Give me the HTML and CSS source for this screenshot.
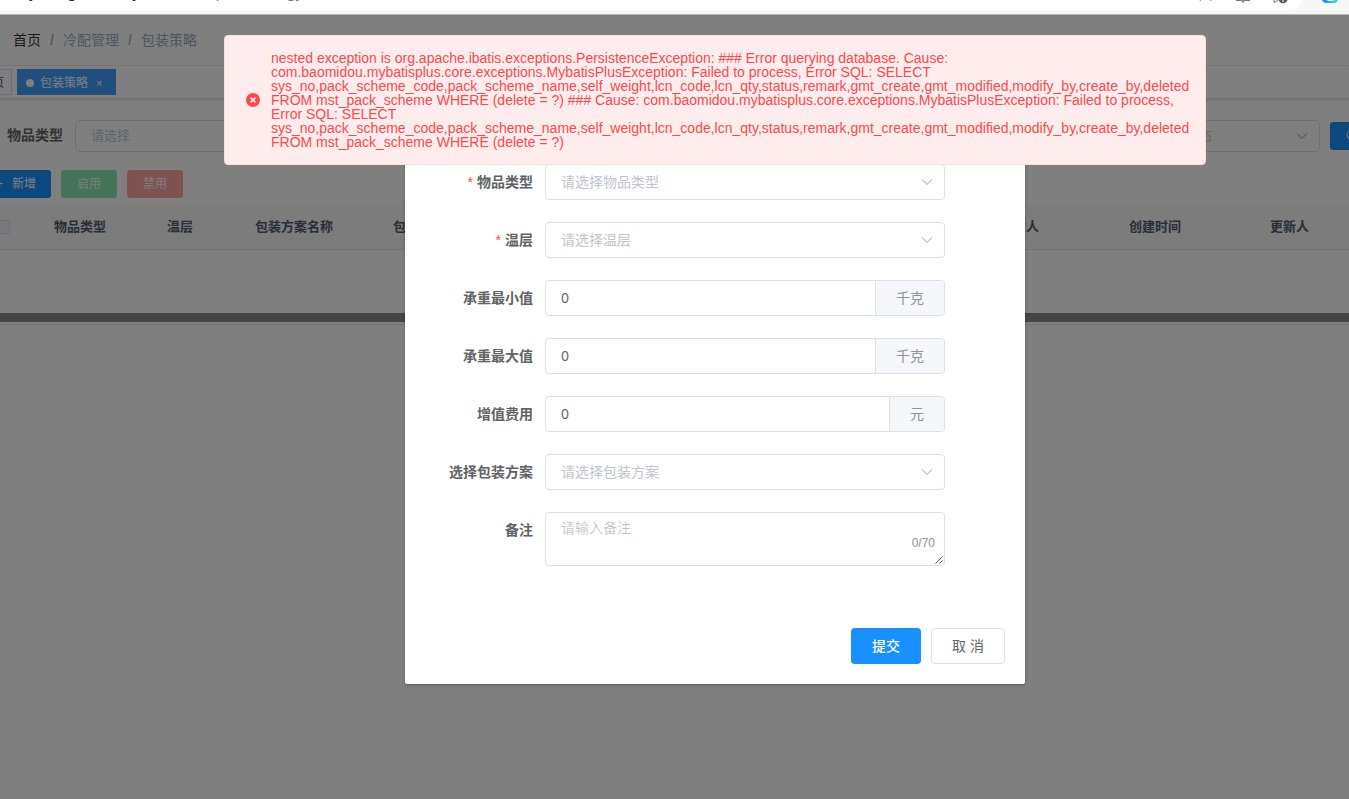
FILE: index.html
```html
<!DOCTYPE html>
<html lang="zh-CN">
<head>
<meta charset="utf-8">
<title>包装策略</title>
<link rel="stylesheet" href="styles.css">
</head>
<body>
<div class="chrome">
  <div class="omnibox">
    <span class="host">yunaighealth.cy</span><span class="path">baise/was/</span><span class="path leaf">packstrategy</span>
    <div class="tools">
      <svg width="14" height="4" viewBox="0 0 14 4"><path d="M1.500 0l-.5 1M11.500 0l.5 1" stroke="#777" fill="none"/></svg>
      <svg width="14" height="4" viewBox="0 0 14 4"><path d="M0 .5h5l2 1 2-1h5M7 0v3" stroke="#777" stroke-width="1.100" fill="none"/></svg>
      <svg width="16" height="4" viewBox="0 0 16 4"><path d="M1 0v2.500l4-2" stroke="#777" fill="none"/><path d="M5.500 0a4.800 4.800 0 0 0 9 0z" fill="#555"/><path d="M10 0v2" stroke="#fff"/></svg>
    </div>
  </div>
  <svg class="copilot" width="16" height="4" viewBox="0 0 16 4"><defs><linearGradient id="cg"><stop stop-color="#2870ea"/><stop offset=".5" stop-color="#20c6ef"/><stop offset="1" stop-color="#38e3b8"/></linearGradient></defs><path d="M0 0h5l1 1h5l1-1h4c-1 2-2 3-4 3H4C2 3 1 2 0 0z" fill="url(#cg)"/></svg>
</div>
<div class="app">
  <nav class="crumbs"><span class="home">首页</span><i>/</i><span>冷配管理</span><i>/</i><span>包装策略</span></nav>
  <div class="tabs"><span class="tab">首页</span><span class="tab active"><b class="dot"></b>包装策略<em>×</em></span></div>
  <div class="filters">
    <label>物品类型</label>
    <div class="pick first">请选择</div>
    <div class="pick last"><span>状态</span><svg width="12" height="8" viewBox="0 0 12 8"><path d="M1 1.500l5 5 5-5" fill="none" stroke="#b4b8c0" stroke-width="1.200"/></svg></div>
    <button class="search"><svg width="14" height="14" viewBox="0 0 14 14"><circle cx="6" cy="6" r="5" fill="none" stroke="#fff"/><path d="M10 10l3 3" stroke="#fff"/></svg></button>
  </div>
  <div class="actions"><span class="act add"><i>+</i>新增</span><span class="act on">启用</span><span class="act off">禁用</span></div>
  <div class="thead">
    <span class="check"></span><span>物品类型</span><span>温层</span><span>包装方案名称</span><span>包装方案</span><span>创建人</span><span>创建时间</span><span>更新人</span>
  </div>
  <div class="tbody"></div>
  <div class="scroll"></div>
  <div class="foot"></div>
</div>
<div class="mask"></div>
<div class="dialog">
  <div class="row"><label><s>*</s>物品类型</label><div class="field"><span class="ph">请选择物品类型</span><svg class="arrow" width="12" height="8" viewBox="0 0 12 8"><path d="M1 1.500l5 5 5-5"/></svg></div></div>
  <div class="row"><label><s>*</s>温层</label><div class="field"><span class="ph">请选择温层</span><svg class="arrow" width="12" height="8" viewBox="0 0 12 8"><path d="M1 1.500l5 5 5-5"/></svg></div></div>
  <div class="row"><label>承重最小值</label><div class="field"><span class="num">0</span><span class="unit">千克</span></div></div>
  <div class="row"><label>承重最大值</label><div class="field"><span class="num">0</span><span class="unit">千克</span></div></div>
  <div class="row"><label>增值费用</label><div class="field"><span class="num">0</span><span class="unit">元</span></div></div>
  <div class="row"><label>选择包装方案</label><div class="field"><span class="ph">请选择包装方案</span><svg class="arrow" width="12" height="8" viewBox="0 0 12 8"><path d="M1 1.500l5 5 5-5"/></svg></div></div>
  <div class="row"><label>备注</label><div class="field area"><span class="ph light">请输入备注</span><span class="count">0/70</span><svg class="grip" width="8" height="8" viewBox="0 0 8 8"><path d="M0.500 7.500l7-7M4.500 7.500l3-3" stroke="#555" fill="none"/></svg></div></div>
  <div class="buttons"><button class="submit">提交</button><button class="cancel">取 消</button></div>
</div>
<div class="message">
  <svg width="14" height="14" viewBox="0 0 14 14"><circle cx="7" cy="7" r="7" fill="#ff4949"/><path d="M4.600 4.600l4.800 4.800M9.400 4.600l-4.800 4.800" stroke="#ffeded" stroke-width="1.500"/></svg>
  <p>nested exception is org.apache.ibatis.exceptions.PersistenceException: ### Error querying database. Cause:<br>com.baomidou.mybatisplus.core.exceptions.MybatisPlusException: Failed to process, Error SQL: SELECT<br>sys_no,pack_scheme_code,pack_scheme_name,self_weight,lcn_code,lcn_qty,status,remark,gmt_create,gmt_modified,modify_by,create_by,deleted<br>FROM mst_pack_scheme WHERE (delete = ?) ### Cause: com.baomidou.mybatisplus.core.exceptions.MybatisPlusException: Failed to process,<br>Error SQL: SELECT<br>sys_no,pack_scheme_code,pack_scheme_name,self_weight,lcn_code,lcn_qty,status,remark,gmt_create,gmt_modified,modify_by,create_by,deleted<br>FROM mst_pack_scheme WHERE (delete = ?)</p>
</div>
</body>
</html>
```
FILE: styles.css
```css
* { box-sizing: border-box; }
body { margin: 0; width: 1349px; height: 799px; overflow: hidden; position: relative; background: #fff; color: #606266; font: 14px/20px "Liberation Sans", "Noto Sans CJK SC", sans-serif; }
i, em { font-style: normal; }
button { font: inherit; padding: 0; border: 0; }

/* browser toolbar */
.chrome { height: 15px; background: #f7f7f7; border-bottom: 1px solid #b9bbb9; display: flex; overflow: hidden; }
.omnibox { width: 1302px; height: 10px; background: #fff; border-bottom-right-radius: 14px 10px; display: flex; padding-left: 29px; line-height: 16px; overflow: hidden; white-space: pre; }
.omnibox span { margin-top: -15px; font-size: 16px; }
.host { color: #222; }
.path { color: #777; }
.leaf { letter-spacing: -.3px; }
.tools { margin-left: auto; display: flex; gap: 23px; padding-right: 13px; }
.tools svg { display: block; }
.copilot { margin-left: 20px; }

/* page */
.app { height: 784px; overflow: hidden; }
.crumbs { height: 51px; display: flex; align-items: center; padding-left: 13px; border-bottom: 1px solid #f0f0f0; color: #97a8be; }
.crumbs i { margin: 0 9px; width: 4px; color: #b0b4bc; font-weight: bold; }
.crumbs .home { color: #303133; }
.tabs { height: 33px; display: flex; align-items: center; gap: 5px; border-bottom: 1px solid #d8dce5; box-shadow: 0 1px 3px rgba(0,0,0,.15); }
.tab { height: 26px; line-height: 26px; font-size: 12px; border: 1px solid #d8dce5; width: 48px; margin-left: -36px; padding-left: 15px; color: #495060; }
.tab.active { width: 99px; margin: 0; padding: 1px 8px 0; display: flex; align-items: center; background: #409eff; border-color: #409eff; color: #fff; }
.dot { width: 8px; height: 8px; border-radius: 50%; background: #fff; margin-right: 6px; }
.tab em { margin-left: 8px; font-size: 11px; }
.filters { height: 32px; margin-top: 21px; display: flex; align-items: center; }
.filters label { width: 75px; flex: none; padding-left: 7px; font-weight: bold; line-height: 18px; padding-bottom: 2px; }
.pick { height: 32px; flex: none; border: 1px solid #dcdfe6; border-radius: 4px; display: flex; align-items: center; color: #c0c4cc; font-size: 13px; line-height: 18px; padding: 0 15px; }
.first { width: 215px; }
.last { width: 215px; margin-left: 815px; padding: 0 11px 0 80px; justify-content: space-between; }
.search { width: 80px; height: 28px; margin-left: 10px; flex: none; background: #1890ff; border-radius: 3px; display: flex; align-items: center; padding-left: 16px; }
.actions { height: 28px; margin-top: 18px; display: flex; gap: 10px; }
.act { height: 28px; width: 56px; line-height: 28px; border-radius: 3px; text-align: center; font-size: 12px; color: #fff; }
.add { width: 66px; margin-left: -15px; padding-right: 4px; background: #1890ff; }
.add i { margin-right: 9px; }
.on { background: #89e6b5; }
.off { background: #ffa4a4; }
.thead { height: 44px; margin-top: 8px; padding-bottom: 1px; background: #f8f8f9; border-bottom: 1px solid #dfe6ec; display: grid; grid-template-columns: 54px 113px 88px 138px 607px 129px 141px 79px; align-items: center; color: #515a6e; font-size: 13px; font-weight: bold; white-space: nowrap; }
.check { width: 14px; height: 14px; margin-left: -4px; border: 1px solid #dcdfe6; border-radius: 2px; background: #edf2fc; }
.tbody { height: 63px; }
.scroll { height: 9px; background: #8b8b8b; }
.foot { height: 3px; border-bottom: 1px solid #e6ebf5; }
.mask { position: absolute; top: 15px; left: 0; right: 0; bottom: 0; background: rgba(0,0,0,.5); }

/* dialog */
.dialog { position: absolute; left: 405px; top: 90px; width: 620px; height: 594px; padding: 74px 20px 20px; background: #fff; border-radius: 2px; box-shadow: 0 1px 3px rgba(0,0,0,.3); }
.row { display: flex; margin-bottom: 22px; }
.row label { width: 120px; padding-right: 12px; line-height: 36px; text-align: right; font-weight: bold; }
.row s { text-decoration: none; color: #ff4949; margin-right: 4px; font-weight: normal; }
.field { position: relative; width: 400px; height: 36px; border: 1px solid #dcdfe6; border-radius: 4px; display: flex; align-items: center; padding-left: 15px; }
.num { font-family: "Noto Sans", sans-serif; }
.ph { color: #c0c4cc; }
.light { font-weight: 300; line-height: 20px; color: #b0b5c0; }
.arrow { margin: 0 11px 0 auto; }
.arrow path { fill: none; stroke: #c0c4cc; stroke-width: 1.2; }
.unit { margin-left: auto; height: 34px; line-height: 34px; padding: 0 20px; border-left: 1px solid #dcdfe6; background: #f5f7fa; color: #909399; border-radius: 0 3px 3px 0; }
.area { height: 54px; align-items: flex-start; padding-top: 5px; }
.count { position: absolute; right: 9px; bottom: 12px; font-size: 12px; line-height: 20px; color: #909399; }
.grip { position: absolute; right: 1px; bottom: 1px; }
.buttons { display: flex; justify-content: flex-end; gap: 10px; margin-top: 62px; }
.buttons button { height: 36px; border-radius: 4px; }
.submit { width: 70px; background: #1890ff; color: #fff; font-weight: 500; }
.cancel { width: 74px; border: 1px solid #dcdfe6; background: #fff; color: #606266; }

/* error toast */
.message { position: absolute; left: 224px; top: 35px; width: 982px; height: 130px; display: flex; align-items: center; gap: 11px; padding-left: 21px; background: #ffeded; border: 1px solid #ffdbdb; border-radius: 4px; color: #ff4949; }
.message p { margin: 0; line-height: 14px; white-space: nowrap; }
```
